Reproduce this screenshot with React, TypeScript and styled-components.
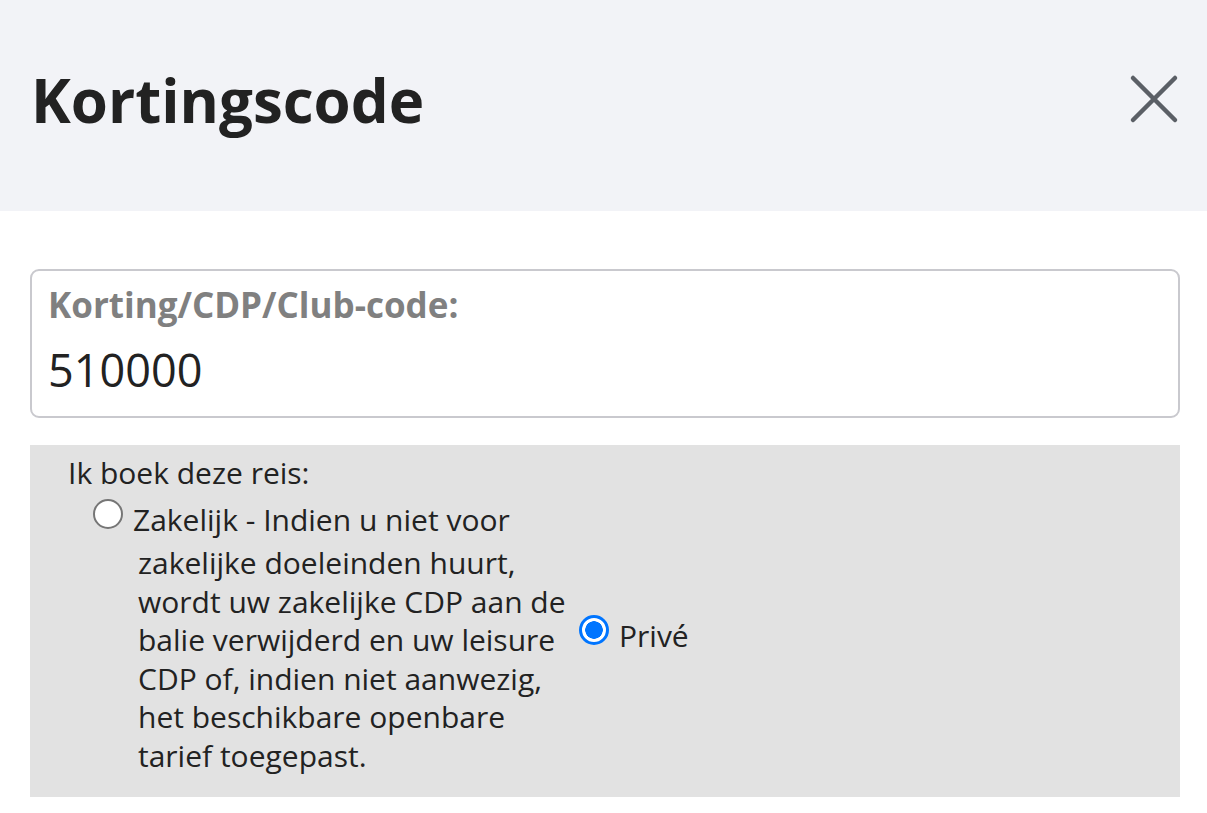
import styled, { createGlobalStyle } from 'styled-components';

const GlobalStyle = createGlobalStyle`
  html, body {
    margin: 0;
    padding: 0;
    background: #fff;
    font-family: "Open Sans", "Liberation Sans", sans-serif;
    color: #222;
  }
`;

const Header = styled.header`
  height: 211px;
  background: #f2f3f7;
  display: flex;
  align-items: center;
  justify-content: space-between;
  padding: 0 28px 11px 31px;
  box-sizing: border-box;
`;

const Title = styled.h1`
  margin: 0;
  font-size: 60px;
  font-weight: 700;
  color: #222;
`;

const CloseButton = styled.button`
  border: none;
  background: none;
  padding: 0;
  margin-bottom: 3px;
  width: 50px;
  height: 50px;
  display: flex;
  align-items: center;
  justify-content: center;
  cursor: pointer;
`;

const Body = styled.main`
  padding: 58px 27px 0 30px;
`;

const CodeField = styled.label`
  display: flex;
  flex-direction: column;
  border: 2px solid #c9c9ce;
  border-radius: 9px;
  padding: 12px 16px 0;
  height: 149px;
  box-sizing: border-box;
`;

const FieldLabel = styled.span`
  font-size: 35px;
  font-weight: 700;
  color: #808080;
  line-height: 44px;
`;

const FieldInput = styled.input`
  border: none;
  outline: none;
  background: transparent;
  padding: 0;
  margin-top: 15px;
  height: 56px;
  font-family: inherit;
  font-size: 45px;
  line-height: 56px;
  color: #222;
`;

const TripBox = styled.section`
  margin-top: 27px;
  background: #e2e2e2;
  padding: 8px 38px 22px;
  color: #222;
  font-size: 30px;
`;

const Question = styled.div`
  line-height: 39px;
`;

const Options = styled.div`
  display: flex;
  align-items: center;
  padding-left: 25px;
  margin-top: 2px;
  line-height: 38.5px;
`;

const Option = styled.label<{ $wrap?: boolean }>`
  display: block;
  cursor: pointer;
  ${p => p.$wrap ? `
    width: 430px;
    padding-left: 45px;
    text-indent: -45px;
  ` : `
    white-space: nowrap;
    margin-left: 11px;
  `}
`;

const Radio = styled.input.attrs({ type: 'radio' })`
  appearance: none;
  width: 30px;
  height: 30px;
  margin: 5px 10px 15px 0;
  border-radius: 50%;
  border: 2.5px solid #767676;
  background: #fff;
  box-sizing: border-box;
  vertical-align: -13px;
  text-indent: 0;
  &:checked {
    border: 3px solid #0075ff;
    background: radial-gradient(circle, #0075ff 0 8.5px, #fff 9px);
  }
`;

export default function App() {
  return (
    <>
      <GlobalStyle />
      <Header>
        <Title>Kortingscode</Title>
        <CloseButton aria-label="Sluiten">
          <svg width="50" height="50" viewBox="0 0 50 50">
            <path d="M4 4 L46 46 M46 4 L4 46" stroke="#5b5f66" strokeWidth="4.5" strokeLinecap="round" />
          </svg>
        </CloseButton>
      </Header>
      <Body>
        <CodeField>
          <FieldLabel>Korting/CDP/Club-code:</FieldLabel>
          <FieldInput defaultValue="510000" />
        </CodeField>
        <TripBox>
          <Question>Ik boek deze reis:</Question>
          <Options>
            <Option $wrap>
              <Radio name="trip" />
              Zakelijk - Indien u niet voor zakelijke doeleinden huurt, wordt uw zakelijke CDP aan de balie verwijderd en uw leisure CDP of, indien niet aanwezig, het beschikbare openbare tarief toegepast.
            </Option>
            <Option>
              <Radio name="trip" defaultChecked />
              Privé
            </Option>
          </Options>
        </TripBox>
      </Body>
    </>
  );
}
